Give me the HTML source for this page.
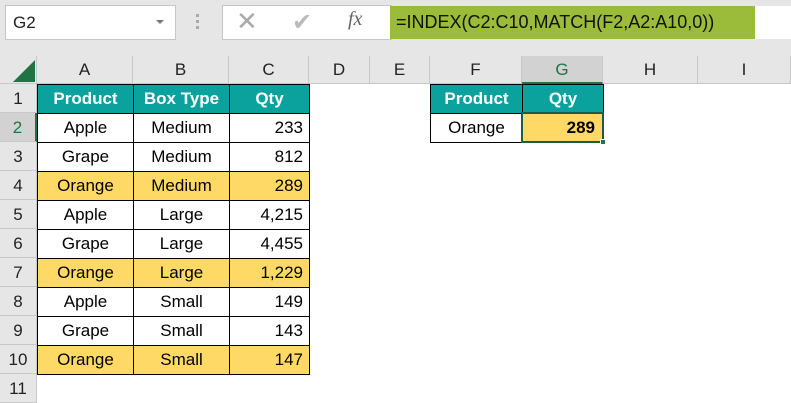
<!DOCTYPE html>
<html><head><style>
*{margin:0;padding:0;box-sizing:border-box}
body{width:791px;height:402px;background:#fff;font-family:"Liberation Sans",Carlito,sans-serif;position:relative;overflow:hidden}
.a{position:absolute}
.c{position:absolute;font-size:17px;line-height:29px;color:#000;white-space:nowrap}
.h{position:absolute;background:#e6e6e6;font-size:17px;color:#222;text-align:center;border-right:1px solid #c8c8c8;border-bottom:1px solid #c8c8c8}
</style></head><body>
<div class="a" style="left:0;top:0;width:791px;height:56px;background:#e6e6e6"></div>
<div class="a" style="left:5px;top:5px;width:171px;height:35px;background:#fff;border:1px solid #c6c6c6;font-size:17px;line-height:33px;padding-left:7px;color:#222">G2</div>
<div class="a" style="left:156px;top:20px;width:0;height:0;border-left:4px solid transparent;border-right:4px solid transparent;border-top:4px solid #777"></div>
<div class="a" style="left:196px;top:14px;width:3px;height:3px;background:#aaa;box-shadow:0 6px 0 #aaa,0 12px 0 #aaa"></div>
<div class="a" style="left:222px;top:5px;width:170px;height:35px;background:#fff;border:1px solid #c6c6c6"></div>
<div class="a" style="left:236px;top:6px;font-size:26px;color:#aaa;font-weight:300">✕</div>
<div class="a" style="left:292px;top:8px;font-size:24px;color:#bbb">✔</div>
<div class="a" style="left:348px;top:8px;font-size:20px;color:#666;font-style:italic;font-family:'Liberation Serif',serif">fx</div>
<div class="a" style="left:390px;top:6px;width:365px;height:33px;background:#9bbb3b"></div>
<div class="a" style="left:755px;top:6px;width:36px;height:33px;background:#fff"></div>
<div class="a" style="left:396px;top:6px;font-size:18px;line-height:33px;color:#111">=INDEX(C2:C10,MATCH(F2,A2:A10,0))</div>

<!-- column headers -->
<div class="h" style="left:0;top:56px;width:37px;height:28px"></div>
<div class="a" style="left:13px;top:60px;width:0;height:0;border-left:22px solid transparent;border-bottom:22px solid #217346"></div>
<div class="h" style="left:37px;top:56px;width:96px;height:28px;line-height:28px">A</div>
<div class="h" style="left:133px;top:56px;width:96px;height:28px;line-height:28px">B</div>
<div class="h" style="left:229px;top:56px;width:80px;height:28px;line-height:28px">C</div>
<div class="h" style="left:309px;top:56px;width:61px;height:28px;line-height:28px">D</div>
<div class="h" style="left:370px;top:56px;width:60px;height:28px;line-height:28px">E</div>
<div class="h" style="left:430px;top:56px;width:92px;height:28px;line-height:28px">F</div>
<div class="h" style="left:522px;top:56px;width:81px;height:28px;line-height:27px;background:#d2d2d2;color:#217346;border-bottom:2px solid #217346">G</div>
<div class="h" style="left:603px;top:56px;width:95px;height:28px;line-height:28px">H</div>
<div class="h" style="left:698px;top:56px;width:93px;height:28px;line-height:28px">I</div>

<!-- row headers -->
<div class="h" style="left:0;top:84px;width:37px;height:29px;line-height:29px">1</div>
<div class="h" style="left:0;top:113px;width:37px;height:29px;line-height:29px;background:#d2d2d2;color:#217346;border-right:2px solid #217346">2</div>
<div class="h" style="left:0;top:142px;width:37px;height:29px;line-height:29px">3</div>
<div class="h" style="left:0;top:171px;width:37px;height:29px;line-height:29px">4</div>
<div class="h" style="left:0;top:200px;width:37px;height:29px;line-height:29px">5</div>
<div class="h" style="left:0;top:229px;width:37px;height:29px;line-height:29px">6</div>
<div class="h" style="left:0;top:258px;width:37px;height:29px;line-height:29px">7</div>
<div class="h" style="left:0;top:287px;width:37px;height:29px;line-height:29px">8</div>
<div class="h" style="left:0;top:316px;width:37px;height:29px;line-height:29px">9</div>
<div class="h" style="left:0;top:345px;width:37px;height:29px;line-height:29px">10</div>
<div class="h" style="left:0;top:374px;width:37px;height:29px;line-height:29px">11</div>

<!-- main table -->
<table class="a" style="left:37px;top:84px;border-collapse:collapse;font-size:17px">
<tr style="background:#0ba29d;color:#fff;font-weight:bold;height:29px"><td style="width:96px;border:1px solid #000;text-align:center">Product</td><td style="width:96px;border:1px solid #000;text-align:center">Box Type</td><td style="width:80px;border:1px solid #000;text-align:center">Qty</td></tr>
<tr style="height:29px"><td style="border:1px solid #000;text-align:center">Apple</td><td style="border:1px solid #000;text-align:center">Medium</td><td style="border:1px solid #000;text-align:right;padding-right:6px">233</td></tr>
<tr style="height:29px"><td style="border:1px solid #000;text-align:center">Grape</td><td style="border:1px solid #000;text-align:center">Medium</td><td style="border:1px solid #000;text-align:right;padding-right:6px">812</td></tr>
<tr style="height:29px;background:#ffd966"><td style="border:1px solid #000;text-align:center">Orange</td><td style="border:1px solid #000;text-align:center">Medium</td><td style="border:1px solid #000;text-align:right;padding-right:6px">289</td></tr>
<tr style="height:29px"><td style="border:1px solid #000;text-align:center">Apple</td><td style="border:1px solid #000;text-align:center">Large</td><td style="border:1px solid #000;text-align:right;padding-right:6px">4,215</td></tr>
<tr style="height:29px"><td style="border:1px solid #000;text-align:center">Grape</td><td style="border:1px solid #000;text-align:center">Large</td><td style="border:1px solid #000;text-align:right;padding-right:6px">4,455</td></tr>
<tr style="height:29px;background:#ffd966"><td style="border:1px solid #000;text-align:center">Orange</td><td style="border:1px solid #000;text-align:center">Large</td><td style="border:1px solid #000;text-align:right;padding-right:6px">1,229</td></tr>
<tr style="height:29px"><td style="border:1px solid #000;text-align:center">Apple</td><td style="border:1px solid #000;text-align:center">Small</td><td style="border:1px solid #000;text-align:right;padding-right:6px">149</td></tr>
<tr style="height:29px"><td style="border:1px solid #000;text-align:center">Grape</td><td style="border:1px solid #000;text-align:center">Small</td><td style="border:1px solid #000;text-align:right;padding-right:6px">143</td></tr>
<tr style="height:29px;background:#ffd966"><td style="border:1px solid #000;text-align:center">Orange</td><td style="border:1px solid #000;text-align:center">Small</td><td style="border:1px solid #000;text-align:right;padding-right:6px">147</td></tr>
</table>

<table class="a" style="left:430px;top:84px;border-collapse:collapse;font-size:17px">
<tr style="background:#0ba29d;color:#fff;font-weight:bold;height:29px"><td style="width:92px;border:1px solid #000;text-align:center">Product</td><td style="width:81px;border:1px solid #000;text-align:center">Qty</td></tr>
<tr style="height:29px"><td style="border:1px solid #000;text-align:center">Orange</td><td style="background:#ffd966;border:1px solid #000;text-align:right;padding-right:8px;font-weight:bold">289</td></tr>
</table>
<div class="a" style="left:521px;top:112px;width:83px;height:31px;border:2px solid #1e5c4a"></div>
<div class="a" style="left:600px;top:139px;width:6px;height:6px;background:#217346;border:1px solid #fff"></div>
</body></html>
